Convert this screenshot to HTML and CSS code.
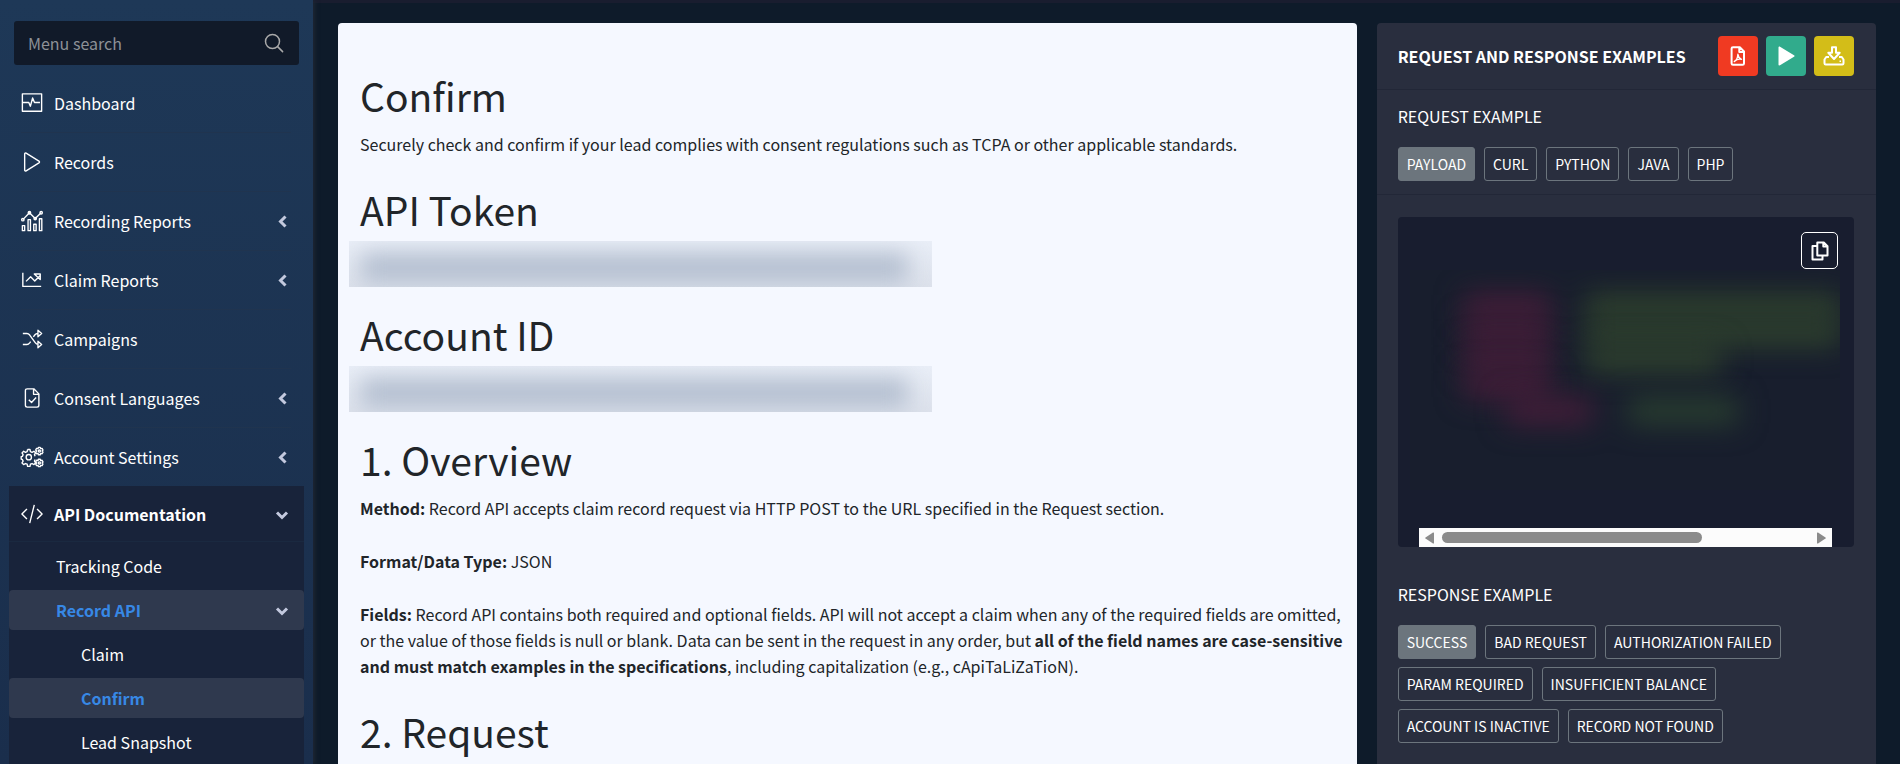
FILE: index.html
```
<!DOCTYPE html>
<html lang="en">
<head>
    <meta charset="UTF-8">
    <meta name="viewport" content="width=device-width, initial-scale=1.0">
    <title>API Documentation - Confirm</title>
    <link rel="stylesheet" href="styles.css">
</head>
<body>

    <!-- Sidebar -->
    <aside class="sidebar">
        <form class="menu-search">
            <input type="text" id="menuSearch" placeholder="Menu search" aria-label="Menu search">
            <button type="submit" aria-label="Search">
                <svg width="20" height="20" viewBox="0 0 20 20" fill="none" stroke="currentColor" stroke-width="1.5" stroke-linecap="round"><circle cx="8.5" cy="8.5" r="7"/><path d="M13.6 13.6 18.6 18.6"/></svg>
            </button>
        </form>

        <ul class="menu">
            <li><a href="#">
                <svg class="menu-icon" viewBox="0 0 24 24"><path d="M1.5 2h21v19h-21zM2 11.5h6.500l1.700 4 2.500-9 2 5h6"/></svg>
                <span>Dashboard</span>
            </a></li>
            <li><a href="#">
                <svg class="menu-icon" viewBox="0 0 24 24"><path d="M4 3.200v17.600c0 1 .8 1.300 1.600.8l14-8.600c.8-.6.8-1.400 0-2l-14-8.600c-.8-.5-1.600-.2-1.600.8z"/></svg>
                <span>Records</span>
            </a></li>
            <li><a href="#">
                <svg class="menu-icon" viewBox="0 0 24 24"><path d="M1.500 17h2.500v5.500h-2.500zM7.700 10.500h2.600v12h-2.600zM13.900 15.500h2.600v7h-2.600zM20.100 9.500h2.600v13h-2.600zM2 10.500 9.200 3l6.300 6.300L22 3"/><circle cx="2" cy="10.500" r="1.300"/><circle cx="9.200" cy="3" r="1.300"/><circle cx="15.500" cy="9.300" r="1.300"/><circle cx="22" cy="3" r="1.300"/></svg>
                <span>Recording Reports</span>
                <svg class="arrow" viewBox="0 0 12 12"><path d="M9.500 1.500 4.500 6.500l5 5"/></svg>
            </a></li>
            <li><a href="#">
                <svg class="menu-icon" viewBox="0 0 24 24"><path d="M2 4v15h20M5.500 13.500l5-5 4.500 4.500 6-6M14.500 5.500h6.500v6z"/></svg>
                <span>Claim Reports</span>
                <svg class="arrow" viewBox="0 0 12 12"><path d="M9.500 1.500 4.500 6.500l5 5"/></svg>
            </a></li>
            <li><a href="#">
                <svg class="menu-icon" viewBox="0 0 24 24"><path d="M2 6h4.500c1.500 0 2 .5 3 1.700l6 8.300c1 1.400 1.500 1.800 3 1.800M2 18h4.500c1.500 0 2-.5 3-1.800l1-1.400M13.500 9.600l1.500-2c1-1.200 1.500-1.600 3-1.600M18.500 2.500 22.500 6l-4 3.500zM18.500 14.500l4 3.500-4 3.500z"/></svg>
                <span>Campaigns</span>
            </a></li>
            <li><a href="#">
                <svg class="menu-icon" viewBox="0 0 24 24"><path d="M4.800 4c0-1.300.7-2 2-2H14l5.500 5.500V20c0 1.300-.7 2-2 2H6.800c-1.300 0-2-.7-2-2zM13.700 2v6h5.800M8.500 14l3 3 5-5.500"/></svg>
                <span>Consent Languages</span>
                <svg class="arrow" viewBox="0 0 12 12"><path d="M9.500 1.500 4.500 6.500l5 5"/></svg>
            </a></li>
            <li><a href="#">
                <svg class="menu-icon" viewBox="0 0 24 24"><path d="M7.200 3.800h2.600l.5 2.300 1.800.8 2-1.200 1.800 1.800-1.200 2 .7 1.700M7.200 3.800 6.700 6.100l-1.800.8-2-1.200-1.800 1.800 1.200 2-.8 1.800-1.300.4v2.600l1.300.4.8 1.800-1.200 2 1.800 1.800 2-1.200 1.800.8.500 2.300h2.600l.5-2.300 1.800-.8 2 1.200 1.800-1.800-1.200-2 .7-1.700"/><circle cx="8.500" cy="12.200" r="2.900"/><circle cx="20" cy="5.500" r="1.200"/><circle cx="20" cy="18.500" r="1.200"/><path d="M19 1.500h2l.4 1.400 1.600-.3 1 1.800-1 1.100 1 1.100-1 1.800-1.600-.3-.4 1.400h-2l-.4-1.400-1.600.3-1-1.800 1-1.100-1-1.100 1-1.800 1.600.3zM19 14.500h2l.4 1.400 1.600-.3 1 1.800-1 1.100 1 1.100-1 1.800-1.600-.3-.4 1.400h-2l-.4-1.400-1.600.3-1-1.800 1-1.100-1-1.100 1-1.800 1.600.3z"/></svg>
                <span>Account Settings</span>
                <svg class="arrow" viewBox="0 0 12 12"><path d="M9.500 1.500 4.500 6.500l5 5"/></svg>
            </a></li>
        </ul>

        <!-- Opened menu group -->
        <div class="menu-open">
            <a href="#" class="menu-title">
                <svg class="menu-icon" viewBox="0 0 24 24"><path d="M6.500 6.500 1 12l5.500 5.500M17.500 6.500 23 12l-5.500 5.500M14.500 2 9.500 22"/></svg>
                <span>API Documentation</span>
                <svg class="arrow" viewBox="0 0 12 12"><path d="M1 4.500 6 9.500l5-5"/></svg>
            </a>
            <ul class="submenu">
                <li><a href="#">Tracking Code</a></li>
                <li><a href="#" class="active"><span>Record API</span>
                    <svg class="arrow" viewBox="0 0 12 12"><path d="M1 4.500 6 9.500l5-5"/></svg>
                </a></li>
                <li><a href="#" class="nested">Claim</a></li>
                <li><a href="#" class="nested active">Confirm</a></li>
                <li><a href="#" class="nested">Lead Snapshot</a></li>
            </ul>
        </div>
    </aside>

    <!-- Page content -->
    <main class="content">
        <article class="doc-card">
            <h1>Confirm</h1>
            <p>Securely check and confirm if your lead complies with consent regulations such as TCPA or other applicable standards.</p>

            <h2>API Token</h2>
            <div class="masked"><div class="masked-bar"></div></div>

            <h2>Account ID</h2>
            <div class="masked"><div class="masked-bar"></div></div>

            <h2>1. Overview</h2>
            <p><b>Method:</b> Record API accepts claim record request via HTTP POST to the URL specified in the Request section.</p>
            <p><b>Format/Data Type:</b> JSON</p>
            <p><b>Fields:</b> Record API contains both required and optional fields. API will not accept a claim when any of the required fields are omitted, or the value of those fields is null or blank. Data can be sent in the request in any order, but <b>all of the field names are case-sensitive and must match examples in the specifications</b>, including capitalization (e.g., cApiTaLiZaTioN).</p>

            <h2>2. Request</h2>
        </article>

        <section class="examples">
            <header class="examples-header">
                <h3>REQUEST AND RESPONSE EXAMPLES</h3>
                <div class="tools">
                    <button type="button" class="tool red" aria-label="Download PDF">
                        <svg width="20" height="20" viewBox="0 0 20 20"><path d="M3.600 2.600c0-.9.500-1.400 1.400-1.400h6.800l4.200 4.200v12c0 .9-.5 1.400-1.400 1.400H5c-.9 0-1.400-.5-1.400-1.400zM11.300 1.500V6H16"/><path class="thin" d="M6.300 15.500c2-1 3.400-3.800 3.600-7.200.3 2.500 1.300 4 3.600 5-2.500-.5-5 .1-7.200 2.200z"/></svg>
                    </button>
                    <button type="button" class="tool green" aria-label="Run">
                        <svg width="20" height="20" viewBox="0 0 20 20"><path class="solid" d="M2.500 1.500v17c0 .8.8 1.200 1.500.8l14-8.500c.7-.4.700-1.200 0-1.600L4 .7c-.7-.4-1.500 0-1.500.8z"/></svg>
                    </button>
                    <button type="button" class="tool yellow" aria-label="Download">
                        <svg width="22" height="20" viewBox="0 0 22 20"><path d="M9 1.200h4v5.600h3.700L11 13 5.300 6.800H9zM6 11H3.200L1.500 13.500v3.700c0 .8.4 1.200 1.200 1.200h16.600c.8 0 1.200-.4 1.200-1.200v-3.700L18.800 11H16"/><path class="thin" d="M16.500 15.200h1.500"/></svg>
                    </button>
                </div>
            </header>

            <div class="example-head">
                <h4>REQUEST EXAMPLE</h4>
                <div class="tabs">
                    <button type="button" class="tab selected">PAYLOAD</button>
                    <button type="button" class="tab">CURL</button>
                    <button type="button" class="tab">PYTHON</button>
                    <button type="button" class="tab">JAVA</button>
                    <button type="button" class="tab">PHP</button>
                </div>
            </div>

            <div class="code-box">
                <button type="button" class="copy" aria-label="Copy">
                    <svg width="18" height="20" viewBox="0 0 18 20"><path d="M6.300 1.500h6.500l3.700 3.700v9.300H6.300zM12.300 1.500v4h4M6 5H1.500v13.500h10V15"/></svg>
                </button>
                <div class="code-lines">
                    <div class="code-line"><i class="key"></i><i class="value long"></i></div>
                    <div class="code-line"><i class="key"></i><i class="value long"></i></div>
                    <div class="code-line"><i class="key"></i><i class="value"></i></div>
                    <div class="code-line"><i class="key"></i></div>
                    <div class="code-line inner"><i class="key"></i><i class="value short"></i></div>
                </div>
                <div class="scrollbar">
                    <svg width="9" height="12" viewBox="0 0 9 12"><path d="M8 .5c.6-.3 1 0 1 .5v10c0 .5-.4.8-1 .5L.5 6.600c-.5-.4-.5-.8 0-1.200z"/></svg>
                    <div class="track"><div class="thumb"></div></div>
                    <svg width="9" height="12" viewBox="0 0 9 12"><path d="M1 .5C.4.200 0 .5 0 1v10c0 .5.4.8 1 .5l7.500-4.900c.5-.4.5-.8 0-1.200z"/></svg>
                </div>
            </div>

            <div class="response-head">
                <h4>RESPONSE EXAMPLE</h4>
                <div class="tabs">
                    <button type="button" class="tab selected">SUCCESS</button>
                    <button type="button" class="tab">BAD REQUEST</button>
                    <button type="button" class="tab">AUTHORIZATION FAILED</button>
                    <button type="button" class="tab">PARAM REQUIRED</button>
                    <button type="button" class="tab">INSUFFICIENT BALANCE</button>
                    <button type="button" class="tab">ACCOUNT IS INACTIVE</button>
                    <button type="button" class="tab">RECORD NOT FOUND</button>
                </div>
            </div>
        </section>
    </main>

</body>
</html>
```
FILE: styles.css
```
* {
    box-sizing: border-box;
}

body {
    margin: 0;
    display: flex;
    height: 100vh;
    overflow: hidden;
    font-family: "Noto Sans CJK SC", "Noto Sans", sans-serif;
    font-size: 16px;
    line-height: 26px;
    color: #212529;
    background-color: #0e1b2a;
}

h1, h2, h3, h4, p, ul {
    margin: 0;
    padding: 0;
}

ul {
    list-style: none;
}

a {
    color: inherit;
    text-decoration: none;
}

button, input {
    font: inherit;
    color: inherit;
}

button {
    cursor: pointer;
}

svg {
    display: block;
    flex: none;
}

/* Sidebar */
.sidebar {
    flex: none;
    width: 313px;
    padding-top: 21px;
    color: #fff;
    background: linear-gradient(#1e3857, #1a2e4c);
    box-shadow: 2px 0 4px #1f2733;
    overflow: hidden;
    z-index: 1;
}

.menu-search {
    display: flex;
    align-items: center;
    height: 44px;
    margin: 0 14px 9px;
    background-color: #111a29;
    border-radius: 3px;
}

.menu-search input {
    flex: 1;
    min-width: 0;
    padding: 0 14px;
    border: none;
    outline: none;
    background: none;
}

.menu-search input::placeholder {
    color: #8d9197;
    opacity: 1;
}

.menu-search button {
    padding: 0 15px;
    border: none;
    background: none;
    color: #a9a9a9;
}

.menu {
    padding: 0 22px 0 21px;
}

.menu li {
    border-bottom: 1px solid #20344f;
}

.menu li:last-child {
    border-bottom: none;
}

.menu a,
.menu-title {
    display: flex;
    align-items: center;
    gap: 11px;
    height: 58px;
}

.menu-icon {
    width: 22px;
    height: 22px;
    fill: none;
    stroke: #fff;
    stroke-width: 1.5;
    stroke-linejoin: round;
    overflow: visible;
}

.arrow {
    width: 12px;
    height: 12px;
    margin-left: auto;
    fill: none;
    stroke: #c3c9de;
    stroke-width: 3;
    overflow: visible;
}

.menu .arrow {
    margin-right: 3px;
}

/* Opened group in the sidebar */
.menu-open {
    height: 100%;
    margin: 0 9px;
    background-color: #18233a;
}

.menu-title {
    height: 56px;
    padding: 0 16px 0 12px;
    border-bottom: 1px solid #1a2940;
    font-weight: 700;
}

.submenu a {
    display: flex;
    align-items: center;
    height: 40px;
    margin: 4px 0;
    padding: 0 16px 0 47px;
    border-radius: 4px;
}

.submenu .nested {
    padding-left: 72px;
}

.submenu .active {
    background-color: #2f394e;
    color: #3788e5;
    font-weight: 700;
}

/* Main area */
.content {
    flex: 1;
    display: grid;
    grid-template-columns: repeat(12, 1fr);
    column-gap: 20px;
    padding: 20px 24px 0 25px;
    border-top: 3px solid #191d2f;
}

.doc-card {
    grid-column: span 8;
    padding: 20px 12px 0 22px;
    background-color: #f5f8ff;
    border-radius: 4px 4px 0 0;
}

.doc-card h1,
.doc-card h2 {
    margin: 26px 0 9px;
    font-size: 39px;
    line-height: 53px;
    font-weight: 400;
}

.doc-card p + p {
    margin-top: 27px;
}

/* Hidden token and account values */
.masked {
    width: 583px;
    max-width: 100%;
    height: 46px;
    margin: -4px 0 -5px -11px;
    padding: 12px 24px 0 12px;
    background: linear-gradient(#e9eef7, #dce1eb);
    overflow: hidden;
}

.masked-bar {
    height: 30px;
    background-color: #b4bfd0;
    filter: blur(11px);
}

/* Request and response examples */
.examples {
    grid-column: span 4;
    background-color: #292e3e;
    border-radius: 4px 4px 0 0;
    color: #fff;
}

.examples-header {
    display: flex;
    align-items: center;
    justify-content: space-between;
    height: 67px;
    padding: 0 22px 0 21px;
    border-bottom: 1px solid #222737;
}

.examples h3 {
    font-size: 16px;
    font-weight: 700;
}

.examples h4 {
    margin-bottom: 18px;
    font-size: 16px;
    font-weight: 400;
}

.tools {
    display: flex;
    gap: 8px;
}

.tool {
    display: flex;
    align-items: center;
    justify-content: center;
    width: 40px;
    height: 40px;
    padding: 0;
    border: none;
    border-radius: 4px;
}

.tool path,
.copy path {
    fill: none;
    stroke: #fff;
    stroke-width: 2;
    stroke-linejoin: round;
}

.tool .thin {
    stroke-width: 1.4;
}

.tool .solid {
    fill: #fff;
    stroke: none;
}

.red {
    background-color: #f03a22;
}

.green {
    background-color: #31ab8c;
}

.yellow {
    background-color: #d3bd18;
}

.example-head {
    padding: 13px 21px;
    border-bottom: 1px solid #222737;
}

.response-head {
    padding: 34px 21px 20px;
}

.tabs {
    display: flex;
    flex-wrap: wrap;
    gap: 8px 9px;
}

.tab {
    height: 34px;
    padding: 0 8px;
    border: 1px solid #6c757d;
    border-radius: 3px;
    background: none;
    font-size: 14px;
    line-height: 20px;
}

.tab.selected {
    background-color: #6c757d;
}

.code-box {
    display: flex;
    flex-direction: column;
    margin: 22px 22px 0 21px;
    background-color: #181d2f;
    border-radius: 4px;
}

.copy {
    display: flex;
    align-items: center;
    justify-content: center;
    align-self: flex-end;
    width: 37px;
    height: 37px;
    margin: 15px 16px 0;
    padding: 0;
    border: 1px solid #fff;
    border-radius: 5px;
    background: none;
}

/* Blurred payload */
.code-lines {
    height: 220px;
    margin: 1px 14px 38px 12px;
    padding: 24px 0 0 54px;
    background-color: #181e2d;
    overflow: hidden;
}

.code-line {
    display: flex;
    gap: 36px;
    height: 26px;
    filter: blur(14px);
}

.code-line.inner {
    padding-left: 42px;
}

.key {
    width: 86px;
    background-color: #451d39;
}

.value {
    width: 135px;
    background-color: #2f422d;
}

.value.long {
    flex: 1;
}

.value.short {
    width: 110px;
    background-color: #293f2f;
}

.scrollbar {
    display: flex;
    align-items: center;
    gap: 8px;
    height: 19px;
    margin: 0 22px 0 21px;
    padding: 0 6px;
    background-color: #fcfcfc;
    fill: #8b8b8b;
}

.track {
    flex: 1;
}

.thumb {
    width: 71%;
    height: 11px;
    border-radius: 6px;
    background-color: #8b8b8b;
}
```
